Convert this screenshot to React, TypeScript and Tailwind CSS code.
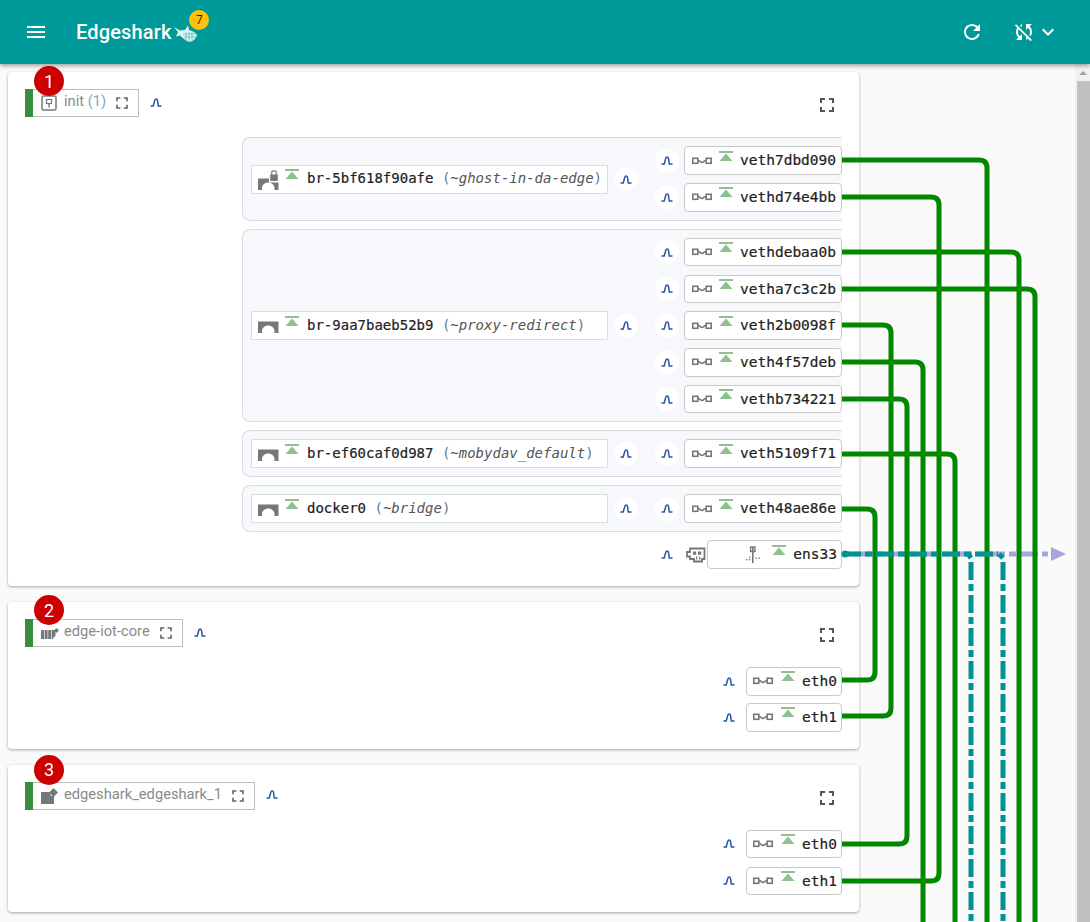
import type { ReactNode } from 'react';

const MONO = "font-['DejaVu_Sans_Mono',monospace] [-webkit-text-stroke:0.2px]";

function Mat({ d, className }: { d: string; className?: string }) {
  return (
    <svg viewBox="0 0 24 24" className={className} fill="currentColor">
      <path d={d} />
    </svg>
  );
}

const FULLSCREEN = 'M7 14H5v5h5v-2H7v-3zm-2-4h2V7h3V5H5v5zm12 7h-3v2h5v-5h-2v3zM14 5v2h3v3h2V5h-5z';

function Capture() {
  return (
    <svg viewBox="0 0 12 9" className="h-[9px] w-[12px]" fill="none" stroke="#2a55a5" strokeWidth="1.5">
      <path d="M0.5 8H3.2L4.8 2.2Q5.2 1 6.2 1T7.5 2.4L8.3 8H11.5" />
    </svg>
  );
}

function CaptureCircle() {
  return (
    <div className="flex h-6 w-6 shrink-0 items-center justify-center rounded-full bg-white">
      <Capture />
    </div>
  );
}

function UpIcon() {
  return (
    <svg viewBox="0 0 14 10" className="mb-[10px] h-[10px] w-[14px] shrink-0" fill="#8fc08f">
      <rect x="0" y="0" width="14" height="2" />
      <path d="M7 2.5L13.5 10H0.5z" />
    </svg>
  );
}

function VethIcon() {
  return (
    <svg viewBox="0 0 20 8" className="h-2 w-5 shrink-0" fill="none" stroke="#777" strokeWidth="1.6">
      <rect x="0.8" y="1.3" width="5" height="5" />
      <rect x="14.2" y="1.3" width="5" height="5" />
      <path d="M6 3.5C8 3.5 8.5 5.5 10 5.5C11.5 5.5 12 3.5 14 3.5" />
    </svg>
  );
}

function BridgeIcon({ locked }: { locked?: boolean }) {
  return (
    <svg viewBox="0 0 21 21" className={`${locked ? '' : 'mb-[6px]'} h-[21px] w-[21px] shrink-0`}>
      <path d="M0 21V9.5H20.5V21H16.5V19C16.5 16 14 13.5 10.2 13.5C6.5 13.5 4 16 4 19V21Z" fill="#777" />
      {locked && (
        <>
          <rect x="11" y="7.5" width="10" height="6" fill="#fff" />
          <path d="M13.6 6V3.8C13.6 1.2 18.4 1.2 18.4 3.8V6" fill="none" stroke="#999" strokeWidth="1.6" />
          <rect x="12.2" y="5.5" width="7.6" height="6.5" rx="0.8" fill="#777" />
        </>
      )}
    </svg>
  );
}

function InitIcon() {
  return (
    <svg viewBox="0 0 16 16" className="h-4 w-4 shrink-0" fill="none">
      <rect x="1" y="1" width="14" height="14" rx="1.5" stroke="#777" strokeWidth="1.5" />
      <rect x="5.5" y="4.5" width="5" height="4" stroke="#777" strokeWidth="1.2" />
      <rect x="7.3" y="8" width="1.4" height="4.5" fill="#777" />
    </svg>
  );
}

function IotIcon() {
  return (
    <svg viewBox="0 0 18 11" className="h-[11px] w-[18px] shrink-0" fill="#777">
      <rect x="0" y="2" width="3" height="9" />
      <rect x="3.6" y="2" width="3" height="9" />
      <rect x="7.2" y="2" width="3" height="9" />
      <path d="M10.8 2H14.5V7.5L11.5 11H10.8Z" />
      <path d="M15.5 0L18 2.5L15.5 5L13 2.5Z" />
    </svg>
  );
}

function BoxIcon() {
  return (
    <svg viewBox="0 0 17 16" className="h-4 w-[17px] shrink-0" fill="#777">
      <path d="M0 4H9.5V8H13V16H0Z" />
      <path d="M12.5 0L17 4.5L12.5 9L8 4.5Z" />
    </svg>
  );
}

function NicIcon() {
  return (
    <svg viewBox="0 0 20 16" className="h-4 w-5 shrink-0" fill="none">
      <path d="M4 1.5H18.5V12H16V14.5H8V12H4V9.5H1V5H4Z" stroke="#777" strokeWidth="1.8" />
      <rect x="7" y="4.5" width="3.2" height="3.2" fill="#777" />
      <rect x="12" y="4.5" width="3.2" height="3.2" fill="#777" />
      <rect x="10" y="9.5" width="1.2" height="3" fill="#777" />
      <rect x="13" y="9.5" width="1.2" height="3" fill="#777" />
    </svg>
  );
}

function PortIcon() {
  return (
    <svg viewBox="0 0 15 18" className="h-[18px] w-[15px] shrink-0" fill="#777">
      <rect x="6" y="1" width="1.6" height="16" />
      <rect x="4.6" y="1" width="4.4" height="4.5" fill="none" stroke="#777" strokeWidth="1.4" />
      <rect x="0" y="13" width="1.4" height="1.4" />
      <rect x="3" y="10.5" width="1.4" height="1.4" />
      <rect x="3" y="13" width="1.4" height="1.4" />
      <rect x="9.5" y="11.5" width="1.4" height="1.4" />
      <rect x="12.5" y="11.5" width="1.4" height="1.4" />
    </svg>
  );
}

function SharkLogo() {
  return (
    <svg viewBox="0 0 23 17" className="h-[17px] w-[23px]">
      <path d="M0 2L6 5.5L11 5L14 0.5L15 5C19 6 22 8 23 10C22 13.5 19 16.5 15 17C12 16 9 13 6 10.5L2 11.5L4 7Z" fill="#dff5f5" />
      <path d="M12 7V16M15 7V17M18 7V15M9 9H22M10 12H22" stroke="#5cbcbc" strokeWidth="0.8" />
    </svg>
  );
}

function Veth({ name }: { name: string }) {
  return (
    <div className="flex items-center gap-[5px]">
      <CaptureCircle />
      <div className="flex h-[28.5px] w-[158px] items-center rounded border border-[#c8c8c8] bg-white pl-[7px]">
        <VethIcon />
        <span className="ml-[7px]">
          <UpIcon />
        </span>
        <span className={`${MONO} ml-[7px] text-[14.5px] leading-none text-[#222]`}>{name}</span>
      </div>
    </div>
  );
}

function Bridge({
  name,
  alias,
  locked,
  veths,
  className,
}: {
  name: string;
  alias: string;
  locked?: boolean;
  veths: string[];
  className?: string;
}) {
  return (
    <div
      className={`flex items-center rounded-l-lg border border-r-0 border-[#d9dbe0] bg-[#f6f8fc] pl-2 ${className ?? ''}`}
    >
      <div className="flex h-[29px] w-[357px] items-center border border-[#d3e2d3] bg-white pl-[6px]">
        <BridgeIcon locked={locked} />
        <span className="ml-[6px] flex items-center">
          <UpIcon />
        </span>
        <span className="mb-[2px] ml-2 whitespace-nowrap font-['DejaVu_Sans_Mono',monospace] text-[14px] leading-none">
          <span className="text-[#222] [-webkit-text-stroke:0.2px]">{name}</span>{' '}
          <span className="text-[#5a7a96]">(</span>
          <span className="italic text-[#555]">~{alias}</span>
          <span className="text-[#5a7a96]">)</span>
        </span>
      </div>
      <div className="ml-[6px]">
        <CaptureCircle />
      </div>
      <div className="ml-[17px] flex flex-col gap-[8.25px]">
        {veths.map((v) => (
          <Veth key={v} name={v} />
        ))}
      </div>
    </div>
  );
}

function Card({
  badge,
  badgeTop,
  icon,
  title,
  width,
  children,
}: {
  badge: number;
  badgeTop: string;
  icon: ReactNode;
  title: ReactNode;
  width: string;
  children: ReactNode;
}) {
  return (
    <section className="relative w-[851px] rounded bg-white p-[17px] shadow-[0_1px_3px_rgba(0,0,0,0.35)]">
      <div
        className={`absolute left-[26px] ${badgeTop} flex h-[30px] w-[30px] items-center justify-center rounded-full bg-[#cc0000] text-[18px] text-white`}
      >
        {badge}
      </div>
      <div className="flex h-7 items-center">
        <div className="h-7 w-2 bg-[#388e3c]" />
        <div className={`flex h-7 ${width} items-center border border-l-0 border-[#bdbdbd] pl-2`}>
          <span className="flex w-[23px] shrink-0 items-center">{icon}</span>
          <span className="mb-[3px] whitespace-nowrap text-[14.7px] text-[#8a8a8a]">{title}</span>
          <Mat d={FULLSCREEN} className="ml-auto mr-[6px] h-5 w-5 shrink-0 text-[#666]" />
        </div>
        <div className="mb-[2px] ml-[11px]">
          <Capture />
        </div>
        <Mat d={FULLSCREEN} className="ml-auto mr-[3px] mt-1 h-6 w-6 text-[#555]" />
      </div>
      {children}
    </section>
  );
}

function EthRow({ name }: { name: string }) {
  return (
    <div className="flex items-center justify-end">
      <Capture />
      <div className="ml-[11px] flex h-[28.5px] w-[96px] items-center rounded border border-[#c8c8c8] bg-white pl-[6px]">
        <VethIcon />
        <span className="ml-2">
          <UpIcon />
        </span>
        <span className={`${MONO} ml-[7px] text-[14.5px] leading-none text-[#222]`}>{name}</span>
      </div>
    </div>
  );
}

const GREEN = '#008800';
const TEAL = '#009393';

function Wires() {
  const greens = [
    'M842 160H979Q987 160 987 168V922',
    'M842 197H931Q939 197 939 205V873Q939 881 931 881H842',
    'M842 252H1011Q1019 252 1019 260V922',
    'M842 289H1027Q1035 289 1035 297V922',
    'M842 325H883Q891 325 891 333V708Q891 716 883 716H842',
    'M842 362H915Q923 362 923 370V922',
    'M842 399H899Q907 399 907 407V836Q907 844 899 844H842',
    'M842 454H947Q955 454 955 462V922',
    'M842 509H867Q875 509 875 517V672Q875 680 867 680H842',
  ];
  return (
    <svg className="pointer-events-none absolute left-0 top-0 h-[922px] w-[1090px]" viewBox="0 0 1090 922" fill="none">
      <path d="M842 554H1048" stroke="#a3a7dd" strokeWidth="5" strokeDasharray="18 4 7 4" strokeDashoffset="20" />
      <path d="M1066 554L1051 547V561Z" fill="#a3a7dd" />
      {greens.map((d) => (
        <path key={d} d={d} stroke={GREEN} strokeWidth="5" />
      ))}
      <path d="M843 554H998" stroke={TEAL} strokeWidth="5" strokeDasharray="18 4 7 4" />
      <path d="M969 555L971 558M999 554L1003 558" stroke={TEAL} strokeWidth="5" />
      <path d="M971 562V922" stroke={TEAL} strokeWidth="5" strokeDasharray="18 4 7 4" />
      <path d="M1003 562V922" stroke={TEAL} strokeWidth="5" strokeDasharray="18 4 7 4" />
      <circle cx="845" cy="554" r="3.5" fill={TEAL} />
    </svg>
  );
}

export default function App() {
  return (
    <div className="relative flex h-screen flex-col overflow-hidden bg-[#fafafa] font-['Roboto',sans-serif]">
      <header className="z-10 flex h-16 shrink-0 items-center bg-[#009999] pl-6 pr-[30px] text-white shadow-[0_2px_4px_rgba(0,0,0,0.35)]">
        <Mat d="M3 18h18v-2H3v2zm0-5h18v-2H3v2zm0-7v2h18V6H3z" className="h-6 w-6" />
        <span className="ml-[28px] text-[20px] font-medium tracking-[0.15px]">Edgeshark</span>
        <div className="relative ml-[3px] mt-[2px]">
          <SharkLogo />
          <div className="absolute left-[15px] top-[-15px] flex h-5 w-5 items-center justify-center rounded-full bg-[#ffc107] text-[12px] text-[#222]">
            7
          </div>
        </div>
        <Mat
          d="M17.65 6.35C16.2 4.9 14.21 4 12 4c-4.42 0-7.99 3.58-7.99 8s3.57 8 7.99 8c3.73 0 6.84-2.55 7.73-6h-2.08c-.82 2.33-3.04 4-5.65 4-3.31 0-6-2.69-6-6s2.69-6 6-6c1.66 0 3.14.69 4.22 1.78L13 11h7V4l-2.35 2.35z"
          className="ml-auto h-6 w-6"
        />
        <Mat
          d="M10 6.35V4.26c-.8.21-1.55.54-2.23.96l1.46 1.46c.25-.12.5-.24.77-.33zm-7.14-.94l2.36 2.36C4.45 8.99 4 10.44 4 12c0 2.21.91 4.2 2.36 5.64L4 20h6v-6l-2.24 2.24C6.68 15.15 6 13.66 6 12c0-1 .25-1.94.68-2.77l8.08 8.08c-.25.13-.5.25-.77.34v2.09c.8-.21 1.55-.54 2.23-.96l2.36 2.36 1.27-1.27L4.14 4.14 2.86 5.41zM20 4h-6v6l2.24-2.24C17.32 8.85 18 10.34 18 12c0 1-.25 1.94-.68 2.77l1.46 1.46C19.55 15.01 20 13.56 20 12c0-2.21-.91-4.2-2.36-5.64L20 4z"
          className="ml-7 h-6 w-6"
        />
        <Mat d="M16.59 8.59 12 13.17 7.41 8.59 6 10l6 6 6-6z" className="h-6 w-6" />
      </header>

      <div className="flex min-h-0 flex-1">
        <main className="flex min-w-0 flex-1 flex-col gap-4 overflow-hidden pl-2 pt-2">
          <Card
            badge={1}
            badgeTop="top-[-6px]"
            icon={<InitIcon />}
            title={
              <>
                init <span className="text-[#8aa3c0]">(1)</span>
              </>
            }
            width="w-[106px]"
          >
            <div className="ml-[217px] mt-5 flex w-[600px] flex-col gap-2">
              <Bridge
                className="h-[84px]"
                name="br-5bf618f90afe"
                alias="ghost-in-da-edge"
                locked
                veths={['veth7dbd090', 'vethd74e4bb']}
              />
              <Bridge
                className="h-[193px]"
                name="br-9aa7baeb52b9"
                alias="proxy-redirect"
                veths={['vethdebaa0b', 'vetha7c3c2b', 'veth2b0098f', 'veth4f57deb', 'vethb734221']}
              />
              <Bridge className="h-[47px]" name="br-ef60caf0d987" alias="mobydav_default" veths={['veth5109f71']} />
              <Bridge className="h-[47px]" name="docker0" alias="bridge" veths={['veth48ae86e']} />
            </div>
            <div className="mt-2 flex items-center justify-end">
              <Capture />
              <span className="ml-[13px]">
                <NicIcon />
              </span>
              <div className="ml-[1px] flex h-[29px] w-[135px] items-center justify-end rounded border border-[#c8c8c8] bg-white pr-1">
                <PortIcon />
                <span className="ml-[11px]">
                  <UpIcon />
                </span>
                <span className={`${MONO} ml-[7px] text-[14.5px] leading-none text-[#222]`}>ens33</span>
              </div>
            </div>
          </Card>

          <Card badge={2} badgeTop="top-[-7px]" icon={<IotIcon />} title="edge-iot-core" width="w-[150px]">
            <div className="mt-5 flex flex-col gap-[7.5px]">
              <EthRow name="eth0" />
              <EthRow name="eth1" />
            </div>
          </Card>

          <Card badge={3} badgeTop="top-[-10px]" icon={<BoxIcon />} title="edgeshark_edgeshark_1" width="w-[222px]">
            <div className="mt-5 flex flex-col gap-[8.5px]">
              <EthRow name="eth0" />
              <EthRow name="eth1" />
            </div>
          </Card>
        </main>

        <div className="flex w-[15px] shrink-0 flex-col bg-[#f1f1f1]">
          <div className="flex h-[17px] items-center justify-center">
            <div className="h-0 w-0 border-x-[4px] border-b-[4px] border-x-transparent border-b-[#a3a3a3]" />
          </div>
          <div className="ml-[2px] flex-1 bg-[#c1c1c1]" />
        </div>
      </div>

      <Wires />
    </div>
  );
}
